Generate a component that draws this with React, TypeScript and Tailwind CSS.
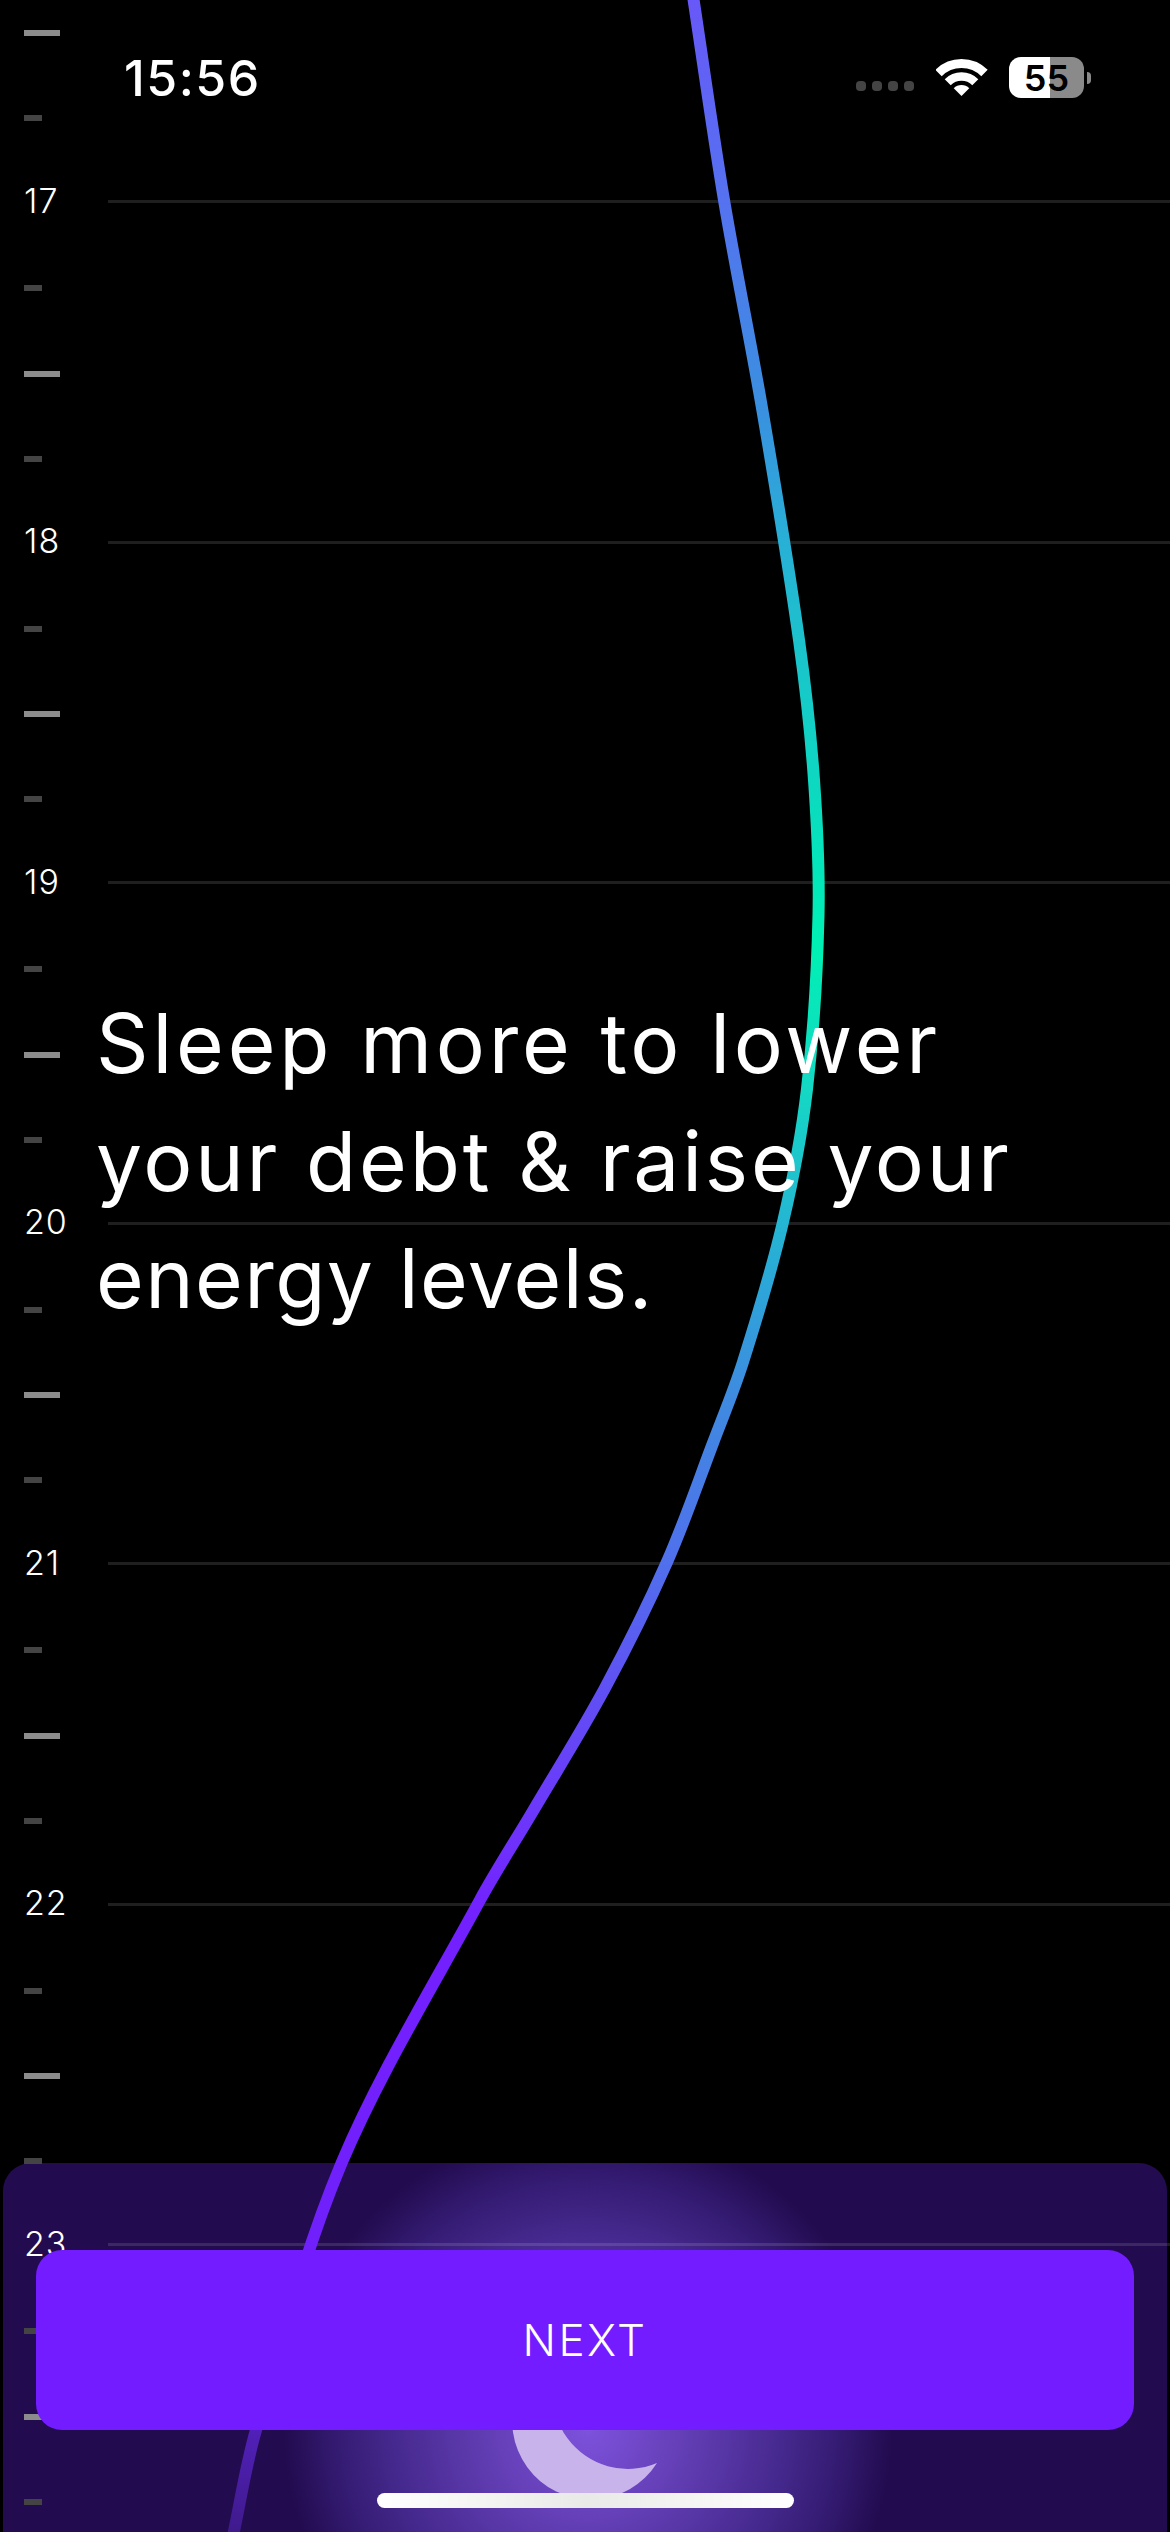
const HOURS = [17, 18, 19, 20, 21, 22, 23];

// curve samples read off the chart, x / y in page pixels
const CURVE: [number, number][] = [
  [693, -4], [724, 200], [762, 408], [799, 640], [814, 780], [818.5, 915],
  [807, 1089], [783, 1222], [743, 1362], [713, 1443], [667, 1562], [605, 1688], [533, 1811], [480, 1900],
  [342, 2162], [256, 2430], [233, 2536],
];

// the line only ever runs downwards, so the tangents can be taken per y
function smoothPath(pts: [number, number][]) {
  const slope = (i: number) => {
    const a = pts[Math.max(i - 1, 0)];
    const b = pts[Math.min(i + 1, pts.length - 1)];
    return (b[0] - a[0]) / (b[1] - a[1]);
  };
  let d = `M${pts[0][0]} ${pts[0][1]}`;
  for (let i = 0; i < pts.length - 1; i++) {
    const [x1, y1] = pts[i];
    const [x2, y2] = pts[i + 1];
    const step = (y2 - y1) / 3;
    d += ` C${x1 + slope(i) * step} ${y1 + step} ${x2 - slope(i + 1) * step} ${y2 - step} ${x2} ${y2}`;
  }
  return d;
}

function MajorTick() {
  return (
    <div className="flex h-[85.125px] items-center pl-6">
      <div className="h-1.5 w-9 bg-[#8c8c8c]" />
    </div>
  );
}

function MinorTick() {
  return (
    <div className="flex h-[85.125px] items-center pl-6">
      <div className="h-1.5 w-[18px] bg-[#444444]" />
    </div>
  );
}

function HourRow({ hour }: { hour: number }) {
  return (
    <div className="flex h-[85.125px] items-center pl-6">
      <span className="-mt-[5px] w-[84px] text-[34px] leading-none font-light tracking-[1px] text-white">{hour}</span>
      <div className="mb-[3px] h-[3px] flex-1 bg-white/12" />
    </div>
  );
}

function Timeline() {
  return (
    <div className="relative -mt-[9.5px] flex flex-col">
      {HOURS.map((hour) => (
        <div key={hour} className="flex flex-col">
          <MajorTick />
          <MinorTick />
          <HourRow hour={hour} />
          <MinorTick />
        </div>
      ))}
      <MajorTick />
      <MinorTick />
    </div>
  );
}

function Curve() {
  return (
    <svg className="absolute inset-0" width="1170" height="2532" viewBox="0 0 1170 2532" fill="none">
      <defs>
        <linearGradient id="sleepCurve" gradientUnits="userSpaceOnUse" x1="0" y1="0" x2="0" y2="2532">
          <stop offset="0" stopColor="#6858f8" />
          <stop offset="0.079" stopColor="#5572f0" />
          <stop offset="0.161" stopColor="#3a90e0" />
          <stop offset="0.214" stopColor="#28b0d6" />
          <stop offset="0.253" stopColor="#1cc2cc" />
          <stop offset="0.35" stopColor="#02e8b8" />
          <stop offset="0.374" stopColor="#00f0b4" />
          <stop offset="0.43" stopColor="#14d8c4" />
          <stop offset="0.505" stopColor="#2ba8d8" />
          <stop offset="0.553" stopColor="#3f8ae0" />
          <stop offset="0.617" stopColor="#5070ec" />
          <stop offset="0.667" stopColor="#6050f4" />
          <stop offset="0.715" stopColor="#6c38fa" />
          <stop offset="0.758" stopColor="#7320ff" />
          <stop offset="0.887" stopColor="#7020fa" />
          <stop offset="0.96" stopColor="#5120b8" />
          <stop offset="1" stopColor="#3f1a8c" />
        </linearGradient>
      </defs>
      <path d={smoothPath(CURVE)} stroke="url(#sleepCurve)" strokeWidth="12" />
    </svg>
  );
}

function GlowPanel() {
  return (
    <div className="absolute top-[2163px] right-[3px] bottom-0 left-[3px] overflow-hidden rounded-t-[28px] bg-[radial-gradient(circle_at_585px_265px,#7e52dd_0,#6540b8_90px,#472a90_190px,#331a70_255px,#220b4e_305px)]">
      <svg className="absolute top-[177px] left-[497px]" width="170" height="170" viewBox="500 2340 170 170">
        <path d="M657 2463 A78.5 78.5 0 1 1 571 2345 A75 75 0 0 0 657 2463 Z" fill="#c8b4ea" />
      </svg>
    </div>
  );
}

function WifiIcon() {
  return (
    <svg width="52" height="38" viewBox="0 0 52 38" fill="none">
      <path d="M2.52 14.02 A32.5 32.5 0 0 1 48.48 14.02" stroke="white" strokeWidth="9" />
      <path d="M11.71 23.21 A19.5 19.5 0 0 1 39.29 23.21" stroke="white" strokeWidth="8.5" />
      <path d="M25.5 37 L17.72 29.22 A11 11 0 0 1 33.28 29.22 Z" fill="white" />
    </svg>
  );
}

function StatusBar() {
  return (
    <div className="absolute top-0 right-0 left-0 flex h-[150px] items-start justify-between pr-[79px] pl-[124px] font-['Inter',sans-serif] text-white">
      <span className="mt-[50px] text-[50px] leading-[56px] font-medium tracking-[1.5px]">15:56</span>
      <div className="mt-[57px] flex items-start">
        <div className="mt-[24px] mr-[22px] flex gap-[6px]">
          <div className="size-[10px] rounded-[4px] bg-[#444444]" />
          <div className="size-[10px] rounded-[4px] bg-[#444444]" />
          <div className="size-[10px] rounded-[4px] bg-[#444444]" />
          <div className="size-[10px] rounded-[4px] bg-[#444444]" />
        </div>
        <div className="mt-[2px] mr-[21px]">
          <WifiIcon />
        </div>
        <div className="flex items-center">
          <div className="flex h-[41px] w-[75px] items-center justify-center rounded-[12px] bg-[linear-gradient(90deg,#ffffff_55%,#8a8a8a_55%)] text-[36px] leading-none font-semibold text-black">
            55
          </div>
          <div className="ml-[3px] h-[12px] w-[4px] rounded-r-full bg-[#8a8a8a]" />
        </div>
      </div>
    </div>
  );
}

export default function App() {
  return (
    <div className="relative h-[2532px] w-[1170px] overflow-hidden bg-black font-['Inter',sans-serif]">
      <GlowPanel />
      <Timeline />
      <Curve />
      <StatusBar />

      <p className="absolute top-[985px] left-[96px] text-[82px] leading-[117.5px] font-normal text-white">
        <span className="block tracking-[3.8px]">Sleep more to lower</span>
        <span className="block tracking-[2.8px]">your debt &amp; raise your</span>
        <span className="block tracking-[1.4px]">energy levels.</span>
      </p>

      <button className="absolute top-[2250px] left-9 flex h-[180px] w-[1098px] items-center justify-center rounded-[26px] bg-[#721cff] text-[44px] font-light tracking-[2.5px] text-white">
        NEXT
      </button>

      <div className="absolute top-[2493px] left-[377px] h-[15px] w-[417px] rounded-full bg-[linear-gradient(90deg,#ffffff,#e9e9e7_50%,#ffffff)]" />
    </div>
  );
}
